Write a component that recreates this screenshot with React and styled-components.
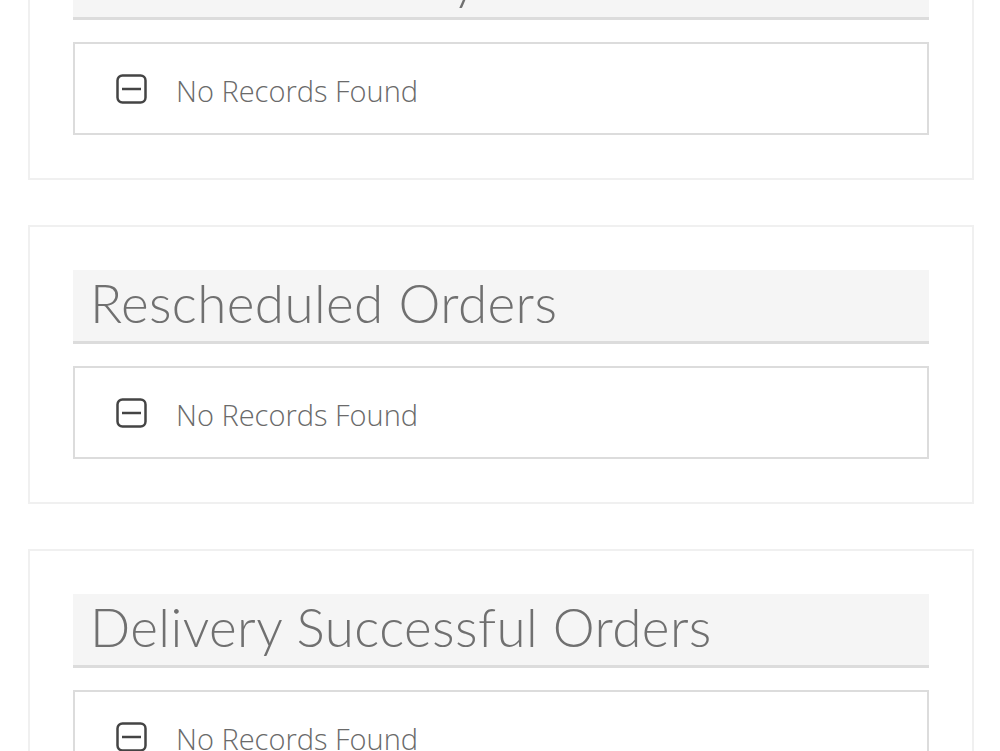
import React from 'react';
import styled, { createGlobalStyle } from 'styled-components';

const GlobalStyle = createGlobalStyle`
  html, body {
    margin: 0;
    padding: 0;
    background: #fff;
    overflow: hidden;
  }
  * {
    box-sizing: border-box;
  }
`

const Page = styled.div`
  display: flex;
  flex-direction: column;
  gap: 45px;
  margin-top: -99px;
  padding: 0 26px 0 28px;
`
const Card = styled.section`
  border: 2px solid #f0f0f0;
  padding: 43px 43px 43px 43px;
  display: flex;
  flex-direction: column;
  gap: 22px;
`
const Header = styled.div`
  background: #f5f5f5;
  border-bottom: 3px solid #dcdcdc;
  height: 74px;
  display: flex;
  align-items: center;
  padding-left: 17px;
  padding-bottom: 6px;
`
const Title = styled.h2`
  margin: 0;
  font-family: 'Lato', 'Open Sans', sans-serif;
  font-weight: 300;
  font-size: 53px;
  color: #707070;
  letter-spacing: 0.4px;
  line-height: 1;
`
const Box = styled.div`
  border: 2px solid #dcdcdc;
  height: 93px;
  display: flex;
  align-items: center;
  padding-left: 41px;
  gap: 29px;
`
const Empty = styled.span`
  font-family: 'Open Sans', sans-serif;
  font-weight: 300;
  font-size: 29px;
  color: #6a6a6a;
  padding-top: 4px;
`

function MinusIcon() {
  return (
    <svg width="31" height="30" viewBox="0 0 31 30" fill="none">
      <rect x="1.5" y="1.5" width="28" height="27" rx="5" stroke="#444" strokeWidth="2.5" />
      <line x1="6" y1="15" x2="25" y2="15" stroke="#444" strokeWidth="2.5" />
    </svg>
  )
}

function OrderCard({ title }) {
  return (
    <Card>
      <Header>
        <Title>{title}</Title>
      </Header>
      <Box>
        <MinusIcon />
        <Empty>No Records Found</Empty>
      </Box>
    </Card>
  )
}

export default function App() {
  return (
    <>
      <GlobalStyle />
      <Page>
        <OrderCard title="Out For Delivery Orders" />
        <OrderCard title="Rescheduled Orders" />
        <OrderCard title="Delivery Successful Orders" />
      </Page>
    </>
  )
}
